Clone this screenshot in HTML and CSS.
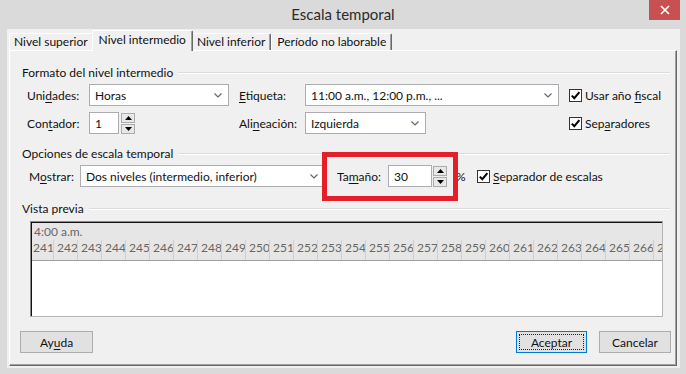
FILE: index.html
```html
<!DOCTYPE html>
<html lang="es">
<head>
<meta charset="utf-8">
<title>Escala temporal</title>
<link rel="stylesheet" href="styles.css">
</head>
<body>
<div class="titlebar">
  <div></div>
  <div class="title">Escala temporal</div>
  <div class="tb-right">
    <div class="close"><svg width="10" height="10" viewBox="0 0 10 10"><path d="M1 1L9 9M9 1L1 9" stroke="#fff" stroke-width="1.6"/></svg></div>
  </div>
</div>
<div class="client">
  <div class="tabs">
    <div class="tab first">Nivel superior</div>
    <div class="tab sel">Nivel intermedio</div>
    <div class="tab">Nivel inferior</div>
    <div class="tab">Período no laborable</div>
  </div>
  <div class="panel">
    <div class="gtitle"><span>Formato del nivel intermedio</span></div>
    <div class="fmt">
      <div class="lbl">Uni<u>d</u>ades:</div>
      <div class="select w140"><span>Horas</span><svg width="8" height="5" viewBox="0 0 8 5"><path d="M0.5 0.5L4 4L7.5 0.5" fill="none" stroke="#666" stroke-width="1.2"/></svg></div>
      <div class="lbl"><u>E</u>tiqueta:</div>
      <div class="select w254"><span>11:00 a.m., 12:00 p.m., ...</span><svg width="8" height="5" viewBox="0 0 8 5"><path d="M0.5 0.5L4 4L7.5 0.5" fill="none" stroke="#666" stroke-width="1.2"/></svg></div>
      <div class="chk"><span class="box"><svg width="11" height="11" viewBox="0 0 11 11"><path d="M1.8 5.6L4.3 8.2L9.4 2.2" fill="none" stroke="#000" stroke-width="2"/></svg></span><span>Usar año <u>f</u>iscal</span></div>

      <div class="lbl">Con<u>t</u>ador:</div>
      <div class="spin-field">
        <div class="input w30">1</div>
        <div class="spinner">
          <div class="sbtn"><svg width="7" height="4" viewBox="0 0 7 4"><path d="M0 4L3.5 0L7 4Z" fill="#000"/></svg></div>
          <div class="sbtn"><svg width="7" height="4" viewBox="0 0 7 4"><path d="M0 0L3.5 4L7 0Z" fill="#000"/></svg></div>
        </div>
      </div>
      <div class="lbl">Ali<u>n</u>eación:</div>
      <div class="select w121"><span>Izquierda</span><svg width="8" height="5" viewBox="0 0 8 5"><path d="M0.5 0.5L4 4L7.5 0.5" fill="none" stroke="#666" stroke-width="1.2"/></svg></div>
      <div class="chk"><span class="box"><svg width="11" height="11" viewBox="0 0 11 11"><path d="M1.8 5.6L4.3 8.2L9.4 2.2" fill="none" stroke="#000" stroke-width="2"/></svg></span><span>Sep<u>a</u>radores</span></div>
    </div>

    <div class="gtitle g2"><span>Opciones de escala temporal</span></div>
    <div class="show">
      <div class="lbl lm">M<u>o</u>strar:</div>
      <div class="select w245"><span>Dos niveles (intermedio, inferior)</span><svg width="8" height="5" viewBox="0 0 8 5"><path d="M0.5 0.5L4 4L7.5 0.5" fill="none" stroke="#666" stroke-width="1.2"/></svg></div>
      <div class="lbl lt">Ta<u>m</u>año:</div>
      <div class="input w44">30</div>
      <div class="spinner s1">
        <div class="sbtn"><svg width="7" height="4" viewBox="0 0 7 4"><path d="M0 4L3.5 0L7 4Z" fill="#000"/></svg></div>
        <div class="sbtn"><svg width="7" height="4" viewBox="0 0 7 4"><path d="M0 0L3.5 4L7 0Z" fill="#000"/></svg></div>
      </div>
      <div class="pct">%</div>
      <div class="chk"><span class="box"><svg width="11" height="11" viewBox="0 0 11 11"><path d="M1.8 5.6L4.3 8.2L9.4 2.2" fill="none" stroke="#000" stroke-width="2"/></svg></span><span><u>S</u>eparador de escalas</span></div>
    </div>

    <div class="gtitle g3"><span>Vista previa</span></div>
    <div class="preview">
      <div class="pv-inner">
        <div class="pv-head">
          <div class="pv-top">4:00 a.m.</div>
          <div class="pv-nums">
            <div class="cell">241</div><div class="cell">242</div><div class="cell">243</div><div class="cell">244</div><div class="cell">245</div><div class="cell">246</div><div class="cell">247</div><div class="cell">248</div><div class="cell">249</div><div class="cell">250</div><div class="cell">251</div><div class="cell">252</div><div class="cell">253</div><div class="cell">254</div><div class="cell">255</div><div class="cell">256</div><div class="cell">257</div><div class="cell">258</div><div class="cell">259</div><div class="cell">260</div><div class="cell">261</div><div class="cell">262</div><div class="cell">263</div><div class="cell">264</div><div class="cell">265</div><div class="cell">266</div><div class="cell">267</div>
          </div>
        </div>
      </div>
    </div>

    <div class="btns">
      <div class="btn b-help">Ay<u>u</u>da</div>
      <div class="spacer"></div>
      <div class="btn b-ok"><span class="focus">Aceptar</span></div>
      <div class="btn b-cancel">Cancelar</div>
    </div>

    <div class="highlight"></div>
  </div>
</div>
</body>
</html>
```

FILE: styles.css
```css
* { box-sizing: border-box; }
html, body { margin: 0; }
body {
  width: 686px;
  height: 374px;
  overflow: hidden;
  background: #dadada;
  font-family: Lato, "Noto Sans", sans-serif;
  font-size: 12px;
  color: #111;
}
u { text-decoration: underline; text-underline-offset: 2px; }

.titlebar {
  height: 29px;
  display: grid;
  grid-template-columns: 1fr auto 1fr;
  align-items: start;
}
.title {
  font-size: 15px;
  line-height: 28px;
  color: #2b2b2b;
}
.tb-right { display: flex; justify-content: flex-end; padding-right: 6px; }
.close {
  width: 31px;
  height: 20px;
  background: #c75050;
  display: flex;
  align-items: center;
  justify-content: center;
}

.client {
  margin-left: 7px;
  width: 673px;
  height: 339px;
  background: #f0f0f0;
  padding: 1px 0 0 2px;
}

.tabs {
  display: flex;
  align-items: flex-end;
  height: 20px;
  position: relative;
  z-index: 1;
}
.tab {
  height: 17px;
  padding: 0 5px;
  line-height: 15px;
  background: #f0f0f0;
  border-top: 1px solid #fff;
  border-left: 1px solid #fff;
  border-right: 1px solid #696969;
  box-shadow: inset -1px 0 0 #a0a0a0;
  border-radius: 2px 2px 0 0;
  white-space: nowrap;
}
.tab.first { padding-left: 4px; }
.tab.sel {
  height: 21px;
  margin: 0 -2px -1px -2px;
  padding: 0 6px;
  line-height: 18px;
  position: relative;
  z-index: 2;
}

.panel {
  position: relative;
  width: 668px;
  height: 316px;
  border: 1px solid;
  border-color: #fff #696969 #696969 #fff;
  box-shadow: inset -1px -1px 0 #a0a0a0;
}

.gtitle {
  display: flex;
  align-items: center;
  height: 16px;
  margin-top: 13px;
  padding: 0 6px 0 12px;
}
.gtitle::after {
  content: "";
  flex: 1;
  height: 1px;
  margin-left: 5px;
  background: #dcdcdc;
  box-shadow: 0 1px 0 #fff;
}
.gtitle.g2 { margin-top: 11px; }
.gtitle.g3 { margin-top: 13px; }

.fmt {
  display: grid;
  grid-template-columns: 62px 150px 66px 264px auto;
  grid-template-rows: 22px 22px;
  row-gap: 6px;
  align-items: center;
  margin: 4px 0 0 17px;
}
.lbl { white-space: nowrap; }

.select {
  height: 22px;
  background: #fff;
  border: 1px solid #abadb3;
  display: flex;
  align-items: center;
  justify-content: space-between;
  padding: 0 6px 0 5px;
  white-space: nowrap;
}
.w140 { width: 140px; }
.w254 { width: 254px; }
.w121 { width: 121px; }
.w245 { width: 245px; flex: none; }

.input {
  height: 22px;
  background: #fff;
  border: 1px solid #abadb3;
  display: flex;
  align-items: center;
  padding-left: 5px;
  flex: none;
}
.w30 { width: 30px; }
.w44 { width: 44px; }

.spin-field { display: flex; align-items: center; }
.spinner {
  display: flex;
  flex-direction: column;
  gap: 1px;
  margin-left: 2px;
  flex: none;
}
.spinner.s1 { margin-left: 1px; }
.sbtn {
  width: 14px;
  height: 10px;
  border: 1px solid #acacac;
  background: #e8e8e8;
  display: flex;
  align-items: center;
  justify-content: center;
}

.chk { display: flex; align-items: center; white-space: nowrap; }
.box {
  width: 13px;
  height: 13px;
  border: 1px solid #333;
  background: #fff;
  display: flex;
  align-items: center;
  justify-content: center;
  margin-right: 3px;
  flex: none;
}

.show {
  display: flex;
  align-items: center;
  height: 22px;
  margin: 4px 0 0 19px;
}
.lm { width: 51px; flex: none; }
.lt { width: 51px; margin-left: 12px; flex: none; }
.pct { width: 21px; margin-left: 9px; flex: none; }

.preview {
  width: 633px;
  height: 96px;
  margin: 5px 0 0 20px;
  border: 1px solid;
  border-color: #8a8a8a #b4b4b4 #b4b4b4 #8a8a8a;
  background: #fff;
  overflow: hidden;
}
.pv-inner {
  height: 100%;
  border-top: 1px solid #111;
  border-left: 1px solid #111;
  overflow: hidden;
}
.pv-head {
  height: 38px;
  background: #e6e6e6;
  border-bottom: 1px solid #a0a0a0;
}
.pv-top {
  height: 17px;
  line-height: 17px;
  padding-left: 2px;
  color: #666;
}
.pv-nums {
  display: flex;
  height: 20px;
  margin-left: -3px;
}
.cell {
  flex: none;
  width: 24px;
  border-left: 1px solid #d0d0d0;
  padding-left: 3px;
  line-height: 16px;
  color: #666;
}

.btns {
  display: flex;
  height: 22px;
  margin: 14px 5px 0 10px;
}
.spacer { flex: 1; }
.btn {
  height: 22px;
  border: 1px solid #adadad;
  background: #e1e1e1;
  display: flex;
  align-items: center;
  justify-content: center;
  flex: none;
}
.b-help { width: 73px; }
.b-ok { width: 71px; border-color: #0078d7; padding: 2px; }
.b-ok .focus {
  width: 100%;
  height: 100%;
  border: 1px dotted #222;
  display: flex;
  align-items: center;
  justify-content: center;
}
.b-cancel { width: 72px; margin-left: 12px; }

.highlight {
  position: absolute;
  left: 312px;
  top: 101px;
  width: 136px;
  height: 49px;
  border: 5px solid #e3202a;
}
```
